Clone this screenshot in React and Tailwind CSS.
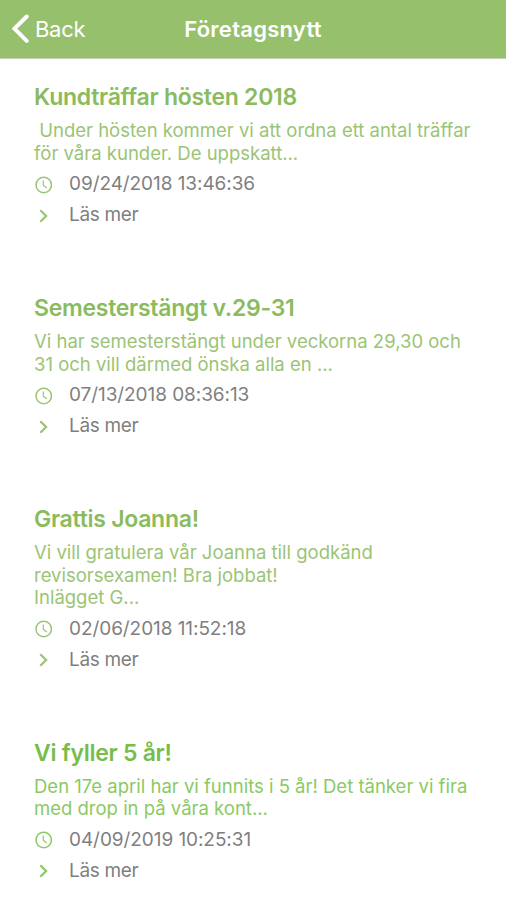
import React from 'react';

const NEWS = [
  {
    id: 1,
    title: 'Kundträffar hösten 2018',
    lines: ['\u00a0Under hösten kommer vi att ordna ett antal träffar', 'för våra kunder. De uppskatt...'],
    date: '09/24/2018 13:46:36',
  },
  {
    id: 2,
    title: 'Semesterstängt v.29-31',
    lines: ['Vi har semesterstängt under veckorna 29,30 och', '31 och vill därmed önska alla en ...'],
    date: '07/13/2018 08:36:13',
  },
  {
    id: 3,
    title: 'Grattis Joanna!',
    lines: ['Vi vill gratulera vår Joanna till godkänd', 'revisorsexamen! Bra jobbat!', 'Inlägget G...'],
    date: '02/06/2018 11:52:18',
  },
  {
    id: 4,
    title: 'Vi fyller 5 år!',
    lines: ['Den 17e april har vi funnits i 5 år! Det tänker vi fira', 'med drop in på våra kont...'],
    date: '04/09/2019 10:25:31',
    fresh: true,
  },
];

const ClockIcon = () => (
  <svg width="18" height="18" viewBox="0 0 18 18" fill="none" stroke="currentColor" strokeWidth="1.5">
    <circle cx="9.7" cy="9" r="7.7" />
    <path d="M9.3 4.5V9.3L12.8 12" strokeWidth="1.2" />
  </svg>
);

const ChevronIcon = () => (
  <svg width="18" height="18" viewBox="0 0 18 18" fill="none" stroke="currentColor" strokeWidth="2.3">
    <path d="M6.3 3.2L12.1 9L6.3 14.8" />
  </svg>
);

const MetaRow = ({ icon, children }) => (
  <div className="flex h-[31px] items-center gap-[17px]">
    {icon}
    {children}
  </div>
);

const NewsItem = ({ item }) => (
  <article className={`mb-[62px] ${item.fresh ? 'text-[#8bc965]' : 'text-[#9bc475]'}`}>
    <h2
      className={`text-[23px] font-semibold leading-[30px] tracking-[-0.27px] ${
        item.fresh ? 'text-[#76bd4b]' : 'text-[#8abb5e]'
      }`}
    >
      {item.title}
    </h2>
    <div className="mt-[7.2px] text-[18.5px] leading-[22.4px]">
      {item.lines.map((line) => (
        <p key={line} className="whitespace-nowrap">{line}</p>
      ))}
    </div>
    <div className="mt-[5px]">
      <MetaRow icon={<ClockIcon />}>
        <span className="text-[19px] tracking-[-0.07px] text-[#7f7f7f]">{item.date}</span>
      </MetaRow>
      <MetaRow icon={<ChevronIcon />}>
        <span className="text-[19px] tracking-[-0.35px] text-[#7f7f7f]">Läs mer</span>
      </MetaRow>
    </div>
  </article>
);

export default function App() {
  return (
    <div className="h-[900px] overflow-hidden bg-white font-['Inter',sans-serif]">
      <header className="grid h-[59px] grid-cols-3 items-center border-b border-[#c5cfba] bg-[#97c06d] text-white">
        <div className="flex items-center gap-[5px] pl-3 text-[22px]">
          <svg
            width="18"
            height="30"
            viewBox="0 0 18 30"
            fill="none"
            stroke="white"
            strokeWidth="4"
            strokeLinecap="round"
          >
            <path d="M14.7 2.5L2.5 14.7L14.7 26.9" />
          </svg>
          <span className="tracking-[-0.3px]">Back</span>
        </div>
        <h1 className="text-center text-[22px] font-semibold tracking-[0.25px]">Företagsnytt</h1>
      </header>
      <main className="pl-[34px] pt-[23.2px]">
        {NEWS.map((item) => (
          <NewsItem key={item.id} item={item} />
        ))}
      </main>
    </div>
  );
}
